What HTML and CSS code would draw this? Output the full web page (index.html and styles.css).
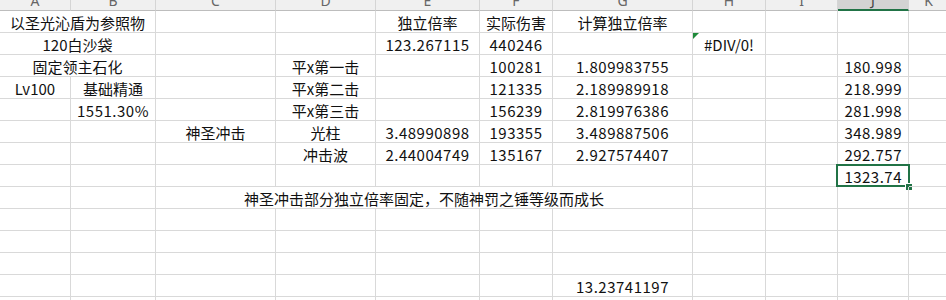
FILE: index.html
```html
<!DOCTYPE html>
<html lang="zh">
<head>
<meta charset="utf-8">
<link rel="stylesheet" href="styles.css">
</head>
<body>
<div class="sheet">
  <div class="hd">A</div><div class="hd">B</div><div class="hd">C</div><div class="hd">D</div><div class="hd">E</div><div class="hd">F</div><div class="hd">G</div><div class="hd">H</div><div class="hd">I</div><div class="hd hd-sel">J</div><div class="hd">K</div>

  <div class="c span2">以圣光沁盾为参照物</div><div class="c"></div><div class="c"></div><div class="c">独立倍率</div><div class="c">实际伤害</div><div class="c">计算独立倍率</div><div class="c"></div><div class="c"></div><div class="c"></div><div class="c"></div>

  <div class="c span2">120白沙袋</div><div class="c"></div><div class="c"></div><div class="c n">123.267115</div><div class="c n">440246</div><div class="c"></div><div class="c err">#DIV/0!</div><div class="c"></div><div class="c"></div><div class="c"></div>

  <div class="c span2">固定领主石化</div><div class="c"></div><div class="c">平x第一击</div><div class="c"></div><div class="c n">100281</div><div class="c n">1.809983755</div><div class="c"></div><div class="c"></div><div class="c n r">180.998</div><div class="c"></div>

  <div class="c">Lv100</div><div class="c">基础精通</div><div class="c"></div><div class="c">平x第二击</div><div class="c"></div><div class="c n">121335</div><div class="c n">2.189989918</div><div class="c"></div><div class="c"></div><div class="c n r">218.999</div><div class="c"></div>

  <div class="c"></div><div class="c n">1551.30%</div><div class="c"></div><div class="c">平x第三击</div><div class="c"></div><div class="c n">156239</div><div class="c n">2.819976386</div><div class="c"></div><div class="c"></div><div class="c n r">281.998</div><div class="c"></div>

  <div class="c"></div><div class="c"></div><div class="c">神圣冲击</div><div class="c">光柱</div><div class="c n">3.48990898</div><div class="c n">193355</div><div class="c n">3.489887506</div><div class="c"></div><div class="c"></div><div class="c n r">348.989</div><div class="c"></div>

  <div class="c"></div><div class="c"></div><div class="c"></div><div class="c">冲击波</div><div class="c n">2.44004749</div><div class="c n">135167</div><div class="c n">2.927574407</div><div class="c"></div><div class="c"></div><div class="c n r">292.757</div><div class="c"></div>

  <div class="c"></div><div class="c"></div><div class="c"></div><div class="c"></div><div class="c"></div><div class="c"></div><div class="c"></div><div class="c"></div><div class="c"></div><div class="c n r sel">1323.74</div><div class="c"></div>

  <div class="c"></div><div class="c"></div><div class="c span5">神圣冲击部分独立倍率固定，不随神罚之锤等级而成长</div><div class="c"></div><div class="c"></div><div class="c"></div><div class="c"></div>

  <div class="c"></div><div class="c"></div><div class="c"></div><div class="c"></div><div class="c"></div><div class="c"></div><div class="c"></div><div class="c"></div><div class="c"></div><div class="c"></div><div class="c"></div>

  <div class="c"></div><div class="c"></div><div class="c"></div><div class="c"></div><div class="c"></div><div class="c"></div><div class="c"></div><div class="c"></div><div class="c"></div><div class="c"></div><div class="c"></div>

  <div class="c"></div><div class="c"></div><div class="c"></div><div class="c"></div><div class="c"></div><div class="c"></div><div class="c"></div><div class="c"></div><div class="c"></div><div class="c"></div><div class="c"></div>

  <div class="c"></div><div class="c"></div><div class="c"></div><div class="c"></div><div class="c"></div><div class="c"></div><div class="c n">13.23741197</div><div class="c"></div><div class="c"></div><div class="c"></div><div class="c"></div>

  <div class="c"></div><div class="c"></div><div class="c"></div><div class="c"></div><div class="c"></div><div class="c"></div><div class="c"></div><div class="c"></div><div class="c"></div><div class="c"></div><div class="c"></div>
</div>
</body>
</html>
```

FILE: styles.css
```css
html, body {
  margin: 0;
  padding: 0;
  background: #ffffff;
}
body {
  width: 946px;
  height: 300px;
  overflow: hidden;
  font-family: "Noto Sans CJK SC", "Noto Sans", sans-serif;
  font-size: 15px;
  color: #111;
}
.sheet {
  display: grid;
  grid-template-columns: 71px 85px 120px 100px 104px 73px 140px 73px 72px 71px 40px;
  grid-template-rows: 11px;
  grid-auto-rows: 22px;
}
.hd {
  box-sizing: border-box;
  background: #f0f0f0;
  border-right: 1px solid #d5d5d5;
  border-bottom: 1px solid #bdbdbd;
  color: #666;
  font-family: "Noto Sans", sans-serif;
  font-size: 14px;
  line-height: 18px;
  text-align: center;
  overflow: hidden;
  display: flex;
  align-items: flex-end;
  justify-content: center;
}
.hd-sel {
  background: #d3d3d3;
  border-bottom: 2px solid #217346;
  color: #444;
}
.c {
  box-sizing: border-box;
  border-right: 1px solid #d9d9d9;
  border-bottom: 1px solid #d9d9d9;
  display: flex;
  align-items: center;
  justify-content: center;
  white-space: nowrap;
  line-height: 21px;
  padding-top: 1px;
  position: relative;
}
.n {
  letter-spacing: 0.5px;
}
.span2 { grid-column: span 2; }
.span5 { grid-column: span 5; }
.r {
  justify-content: flex-end;
  padding-right: 6px;
}
.err::before {
  content: "";
  position: absolute;
  left: 0;
  top: 0;
  border-top: 6px solid #1e8a3a;
  border-right: 6px solid transparent;
}
.sel::before {
  content: "";
  position: absolute;
  left: -2px;
  top: -1px;
  right: -2px;
  bottom: -1px;
  border: 2px solid #217346;
}
.sel::after {
  content: "";
  position: absolute;
  right: -4px;
  bottom: -4px;
  width: 6px;
  height: 6px;
  background: #217346;
  border: 1px solid #fff;
  border-right: none;
  border-bottom: none;
}
```
